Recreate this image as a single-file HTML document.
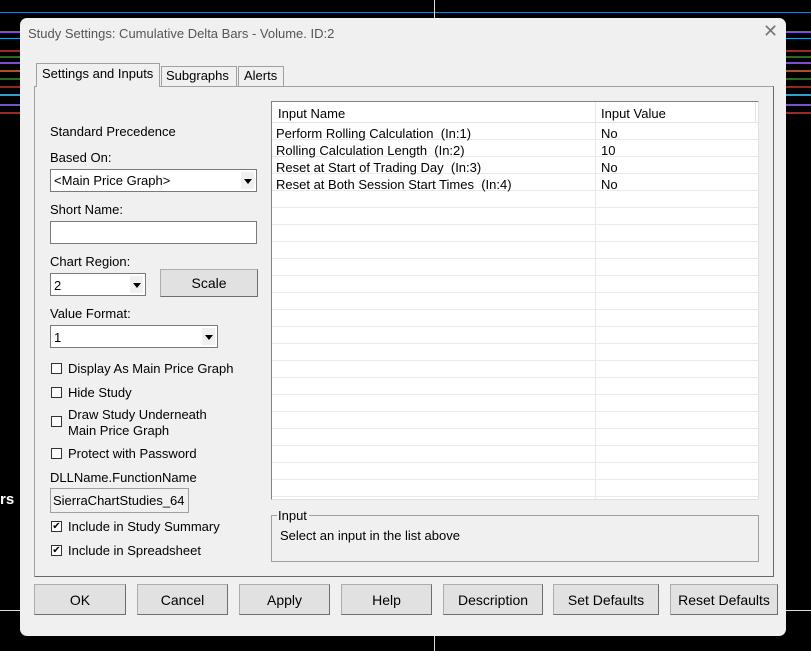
<!DOCTYPE html>
<html><head><style>
body{margin:0;width:811px;height:651px;background:#000;position:relative;overflow:hidden;font-family:"Liberation Sans",sans-serif;font-size:13px;color:#000}
.a{position:absolute}
.line{position:absolute;height:2px}
.dlg{position:absolute;left:20px;top:18px;width:766px;height:618px;background:#f0f0f0;border-radius:7px}
.t{position:absolute;white-space:nowrap}
.btn{position:absolute;top:584px;height:31px;background:#e1e1e1;border:1px solid #adadad;border-right-color:#6e6e6e;border-bottom-color:#6e6e6e;box-sizing:border-box;text-align:center;line-height:30px;font-size:14px}
.cb{position:absolute;width:11px;height:11px;border:1px solid #333;background:#fff;box-sizing:border-box;font-size:10px;line-height:9px;text-align:center}
.inp{position:absolute;background:#fff;border:1px solid #7a7a7a;box-sizing:border-box}
.dd{position:absolute;width:13px;top:2px;bottom:2px;right:2px;background:#f0f0f0}
.dd:after{content:"";position:absolute;left:3px;top:7px;border:4px solid transparent;border-top:5px solid #000}
.row{position:absolute;left:0;right:0;height:17px;border-bottom:1px solid #eaeaea;box-sizing:border-box}
</style></head><body>
<div class="line" style="top:12px;left:0;width:811px;height:1px;background:#2a7fb8"></div>
<div class="line" style="top:31px;left:0;width:811px;background:#7a4fd0"></div>
<div class="line" style="top:38px;left:0;width:811px;height:1px;background:#2a9fd0"></div>
<div class="line" style="top:50px;left:0;width:811px;background:#9a2a20"></div>
<div class="line" style="top:56px;left:0;width:811px;background:#2a6a20"></div>
<div class="line" style="top:62px;left:0;width:811px;background:#7a4fd0"></div>
<div class="line" style="top:70px;left:0;width:811px;background:#b05020"></div>
<div class="line" style="top:78px;left:0;width:811px;background:#2a6a20"></div>
<div class="line" style="top:86px;left:0;width:811px;background:#8a2a20"></div>
<div class="line" style="top:94px;left:0;width:811px;background:#2a9fd0"></div>
<div class="line" style="top:104px;left:0;width:811px;background:#7a4fd0"></div>
<div class="line" style="top:112px;left:0;width:811px;background:#9a2a20"></div>
<div class="a" style="left:434px;top:0;width:1px;height:651px;background:#ddd"></div>
<div class="a" style="left:0;top:610px;width:811px;height:1px;background:#ddd"></div>
<div class="t" style="left:0;top:491px;color:#fff;font-weight:bold;font-size:15px">rs</div>
<div class="dlg">
<div class="t" style="left:8px;top:8px;color:#555;font-size:13px">Study Settings: Cumulative Delta Bars - Volume. ID:2</div>
<div class="t" style="left:743px;top:3px;color:#777;font-size:18px">✕</div>
</div>
<!-- tab panel -->
<div class="a" style="left:34px;top:86px;width:740px;height:491px;border:1px solid #a0a0a0;border-right-color:#696969;border-bottom-color:#696969;box-sizing:border-box"></div>
<div class="a" style="left:36px;top:63px;width:124px;height:24px;background:#f0f0f0;border:1px solid #a0a0a0;border-bottom:none;box-sizing:border-box"></div>
<div class="t" style="left:42px;top:66px">Settings and Inputs</div>
<div class="a" style="left:161px;top:66px;width:76px;height:21px;border:1px solid #a0a0a0;border-bottom:none;box-sizing:border-box"></div>
<div class="t" style="left:166px;top:68px">Subgraphs</div>
<div class="a" style="left:238px;top:66px;width:46px;height:21px;border:1px solid #a0a0a0;border-bottom:none;box-sizing:border-box"></div>
<div class="t" style="left:244px;top:68px">Alerts</div>
<!-- left column -->
<div class="t" style="left:50px;top:124px">Standard Precedence</div>
<div class="t" style="left:50px;top:150px">Based On:</div>
<div class="inp" style="left:50px;top:169px;width:207px;height:23px"><div class="t" style="left:3px;top:3px">&lt;Main Price Graph&gt;</div><div class="dd"></div></div>
<div class="t" style="left:50px;top:202px">Short Name:</div>
<div class="inp" style="left:50px;top:221px;width:207px;height:23px"></div>
<div class="t" style="left:50px;top:254px">Chart Region:</div>
<div class="inp" style="left:50px;top:273px;width:96px;height:23px"><div class="t" style="left:3px;top:4px">2</div><div class="dd"></div></div>
<div class="a" style="left:160px;top:269px;width:98px;height:28px;background:#e1e1e1;border:1px solid #adadad;border-right-color:#6e6e6e;border-bottom-color:#6e6e6e;box-sizing:border-box;text-align:center;line-height:26px;font-size:14px">Scale</div>
<div class="t" style="left:50px;top:306px">Value Format:</div>
<div class="inp" style="left:50px;top:325px;width:168px;height:23px"><div class="t" style="left:3px;top:4px">1</div><div class="dd"></div></div>
<div class="cb" style="left:51px;top:363px"></div><div class="t" style="left:68px;top:361px">Display As Main Price Graph</div>
<div class="cb" style="left:51px;top:387px"></div><div class="t" style="left:68px;top:385px">Hide Study</div>
<div class="cb" style="left:51px;top:416px"></div><div class="t" style="left:68px;top:407px;line-height:16px">Draw Study Underneath<br>Main Price Graph</div>
<div class="cb" style="left:51px;top:448px"></div><div class="t" style="left:68px;top:446px">Protect with Password</div>
<div class="t" style="left:50px;top:470px">DLLName.FunctionName</div>
<div class="a" style="left:50px;top:488px;width:139px;height:25px;border:1px solid #a0a0a0;box-sizing:border-box;background:#f0f0f0"><div class="t" style="left:2px;top:4px">SierraChartStudies_64</div></div>
<div class="cb" style="left:51px;top:521px">✔</div><div class="t" style="left:68px;top:519px">Include in Study Summary</div>
<div class="cb" style="left:51px;top:545px">✔</div><div class="t" style="left:68px;top:543px">Include in Spreadsheet</div>
<!-- list -->
<div class="a" style="left:271px;top:101px;width:488px;height:399px;background:#fff;border:1px solid #828282;border-right-color:#e0e0e0;border-bottom-color:#e0e0e0;box-sizing:border-box;overflow:hidden">
 <div class="row" style="top:0;height:21px;border-bottom:1px solid #e5e5e5"></div>
 <div class="t" style="left:6px;top:4px">Input Name</div>
 <div class="t" style="left:329px;top:4px">Input Value</div>
 <div class="a" style="left:323px;top:0;width:1px;height:399px;background:#e8e8e8"></div>
 <div class="a" style="left:483px;top:0;width:1px;height:21px;background:#e5e5e5"></div>
 <div class="row" style="top:21px"></div><div class="row" style="top:38px"></div><div class="row" style="top:55px"></div><div class="row" style="top:72px"></div>
 <div class="row" style="top:89px"></div><div class="row" style="top:106px"></div><div class="row" style="top:123px"></div><div class="row" style="top:140px"></div>
 <div class="row" style="top:157px"></div><div class="row" style="top:174px"></div><div class="row" style="top:191px"></div><div class="row" style="top:208px"></div>
 <div class="row" style="top:225px"></div><div class="row" style="top:242px"></div><div class="row" style="top:259px"></div><div class="row" style="top:276px"></div>
 <div class="row" style="top:293px"></div><div class="row" style="top:310px"></div><div class="row" style="top:327px"></div><div class="row" style="top:344px"></div>
 <div class="row" style="top:361px"></div><div class="row" style="top:378px"></div>
 <div class="t" style="left:4px;top:24px">Perform Rolling Calculation&nbsp;&nbsp;(In:1)</div><div class="t" style="left:329px;top:24px">No</div>
 <div class="t" style="left:4px;top:41px">Rolling Calculation Length&nbsp;&nbsp;(In:2)</div><div class="t" style="left:329px;top:41px">10</div>
 <div class="t" style="left:4px;top:58px">Reset at Start of Trading Day&nbsp;&nbsp;(In:3)</div><div class="t" style="left:329px;top:58px">No</div>
 <div class="t" style="left:4px;top:75px">Reset at Both Session Start Times&nbsp;&nbsp;(In:4)</div><div class="t" style="left:329px;top:75px">No</div>
</div>
<!-- Input group -->
<div class="a" style="left:271px;top:515px;width:488px;height:47px;border:1px solid #a0a0a0;box-sizing:border-box"></div>
<div class="t" style="left:277px;top:508px;background:#f0f0f0;padding:0 2px 0 1px">Input</div>
<div class="t" style="left:280px;top:528px">Select an input in the list above</div>
<!-- buttons -->
<div class="btn" style="left:34px;width:92px">OK</div>
<div class="btn" style="left:137px;width:91px">Cancel</div>
<div class="btn" style="left:239px;width:91px">Apply</div>
<div class="btn" style="left:341px;width:91px">Help</div>
<div class="btn" style="left:443px;width:100px">Description</div>
<div class="btn" style="left:553px;width:106px">Set Defaults</div>
<div class="btn" style="left:670px;width:108px">Reset Defaults</div>
</body></html>
